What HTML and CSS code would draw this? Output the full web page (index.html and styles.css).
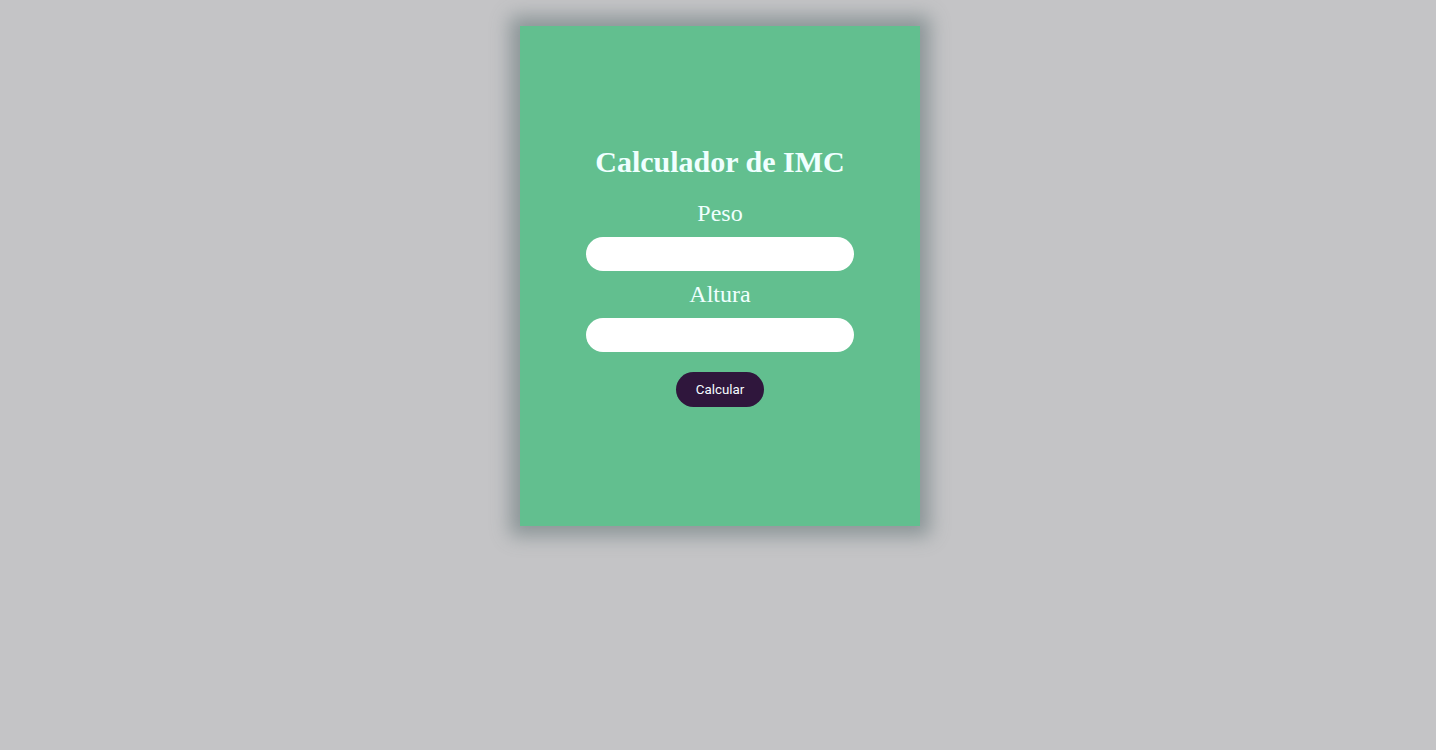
FILE: index.html
```html
<!DOCTYPE html>
<html lang="pt">
<head>
<meta charset="utf-8">
<title>Calculador de IMC</title>
<link rel="stylesheet" href="styles.css">
</head>
<body>
<main class="page">
  <section class="card">
    <h1 class="title">Calculador de IMC</h1>
    <label class="label label-first" for="peso">Peso</label>
    <input class="field" id="peso" type="text">
    <label class="label label-next" for="altura">Altura</label>
    <input class="field" id="altura" type="text">
    <button class="btn" type="button">Calcular</button>
  </section>
</main>
</body>
</html>
```

FILE: styles.css
```css
html, body {
  margin: 0;
  padding: 0;
  background: #c4c4c6;
  height: 100%;
}
.page {
  display: flex;
  justify-content: center;
  padding: 26px 0 0 4px;
}
.card {
  width: 400px;
  height: 500px;
  box-sizing: border-box;
  background: #62bf8f;
  box-shadow: 0 0 18px 10px #8c9698;
  display: flex;
  flex-direction: column;
  align-items: center;
  padding-top: 118px;
  font-family: "Liberation Serif", "Times New Roman", serif;
  color: #f0ffff;
}
.title {
  margin: 0;
  font-size: 30px;
  line-height: 36px;
  font-weight: bold;
}
.label {
  display: block;
  font-size: 24px;
  line-height: 28px;
  padding-top: 1px;
}
.label-first { margin-top: 18px; }
.label-next { margin-top: 8px; }
.field {
  margin-top: 10px;
  width: 268px;
  height: 34px;
  box-sizing: border-box;
  border: none;
  border-radius: 17px;
  background: #ffffff;
  outline: none;
  padding: 0 14px;
}
.btn {
  margin-top: 20px;
  width: 88px;
  height: 35px;
  border: none;
  border-radius: 18px;
  background: #2f163c;
  color: #f5fbff;
  font-family: Roboto, "Liberation Sans", sans-serif;
  font-size: 13.33px;
  padding: 0;
}
```
